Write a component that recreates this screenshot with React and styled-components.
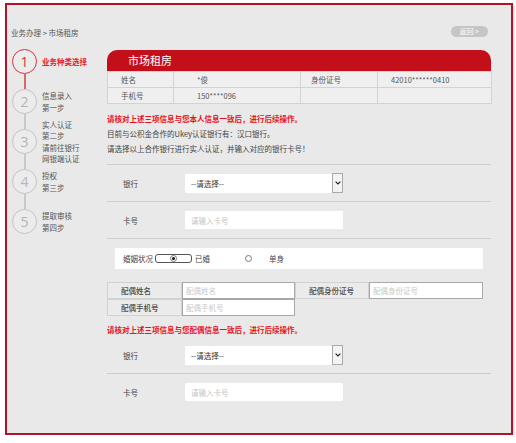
import React from 'react'
import styled, { createGlobalStyle } from 'styled-components'

const GlobalStyle = createGlobalStyle`
    body {
        margin: 0;
        background: #fff;
        font-family: "Noto Sans CJK SC", "Noto Sans", sans-serif;
    }
`

const Frame = styled.div`
    box-sizing: border-box;
    width: 508px;
    height: 432px;
    margin: 3px 0 0 5px;
    border: 2px solid #b0132b;
    background: #e9e9e9;
    box-shadow: 1px 1px 2px rgba(0, 0, 0, 0.18);
    display: flex;
    flex-direction: column;
`
const TopBar = styled.div`
    box-sizing: border-box;
    height: 44px;
    display: flex;
    align-items: center;
    justify-content: space-between;
    padding: 12px 23px 0 4px;
`
const Crumb = styled.div`
    font-size: 7.5px;
    line-height: 12px;
    color: #555;
`
const BackButton = styled.div`
    background: #c6c6c6;
    color: #fff;
    font-size: 7px;
    height: 11px;
    line-height: 11px;
    padding: 0 9px;
    border-radius: 6px;
    margin-top: -4px;
`
const Main = styled.div`
    display: flex;
    flex: 1;
`

const Sidebar = styled.div`
    box-sizing: border-box;
    width: 100px;
    padding-left: 5px;
    display: flex;
    flex-direction: column;
`
const Step = styled.div`
    display: flex;
    height: 40px;
    gap: 5px;
`
const Rail = styled.div`
    display: flex;
    flex-direction: column;
    align-items: center;
    width: 25px;
`
const Circle = styled.div`
    box-sizing: border-box;
    width: 25px;
    height: 25px;
    border-radius: 50%;
    border: 1.5px solid ${p => (p.$active ? '#d6353d' : '#c4c4c4')};
    color: ${p => (p.$active ? '#d6353d' : '#b4b4b4')};
    background: #ececec;
    font-family: "Open Sans", sans-serif;
    font-size: 14px;
    display: flex;
    align-items: center;
    justify-content: center;
`
const Connector = styled.div`
    width: 2px;
    height: 15px;
    background: ${p => (p.$active ? '#d46a70' : '#c8c8c8')};
`
const StepText = styled.div`
    height: 25px;
    display: flex;
    flex-direction: column;
    justify-content: center;
    font-size: 7.5px;
    line-height: 11.5px;
    white-space: nowrap;
    color: ${p => (p.$active ? '#e3222b' : '#555')};
    font-weight: ${p => (p.$active ? 700 : 400)};
`

const Content = styled.div`
    width: 384px;
    margin-top: 1px;
`
const Header = styled.div`
    height: 21px;
    line-height: 21px;
    padding-left: 21px;
    background: #c20f1a;
    border-radius: 10px 10px 0 0;
    color: #fff;
    font-size: 11px;
`
const InfoTable = styled.table`
    width: 100%;
    border-collapse: collapse;
    table-layout: fixed;
`
const Cell = styled.td`
    height: 15px;
    padding: 0 0 0 ${p => p.$pad}px;
    border: 1px solid #d3d3d3;
    background: #efefef;
    font-size: 7.5px;
    line-height: 15px;
    color: #555;
`
const Notes = styled.div`
    margin-top: 7px;
`
const Note = styled.p`
    margin: 0;
    font-size: 7.5px;
    line-height: 15px;
    color: ${p => (p.$warn ? '#e5141d' : '#444')};
    font-weight: ${p => (p.$warn ? 700 : 400)};
`
const Divider = styled.div`
    height: 1px;
    background: #cdcdcd;
    margin-top: ${p => p.$top || 0}px;
`
const FormRow = styled.div`
    height: 36px;
    display: flex;
    align-items: center;
    padding-left: 16px;
`
const FieldLabel = styled.div`
    width: 62px;
    font-size: 7.5px;
    color: #444;
`
const SelectBox = styled.div`
    box-sizing: border-box;
    width: 158px;
    height: 19px;
    background: #fff;
    display: flex;
    align-items: center;
    justify-content: space-between;
    padding-left: 6px;
    font-size: 7.5px;
    color: #333;
`
const ArrowBox = styled.div`
    box-sizing: border-box;
    width: 11px;
    height: 20px;
    border: 1px solid #a9a9a9;
    background: #f3f3f3;
    display: flex;
    align-items: center;
    justify-content: center;
`
const TextInput = styled.input`
    box-sizing: border-box;
    width: 158px;
    height: 18px;
    border: 0;
    padding: 0 6px;
    background: #fff;
    font-family: inherit;
    font-size: 7.5px;
    outline: none;
    &::placeholder {
        color: #c4c4c4;
    }
`

const MaritalBox = styled.div`
    height: 21px;
    margin: 9px 8px 0;
    padding-left: 8px;
    background: #fff;
    display: flex;
    align-items: center;
    font-size: 7.5px;
    color: #444;
`
const RadioFrame = styled.div`
    box-sizing: border-box;
    width: 37px;
    height: 9px;
    margin-left: 2px;
    border: 1px solid #555;
    border-radius: 3px;
    display: flex;
    align-items: center;
    justify-content: center;
`
const Radio = styled.div`
    box-sizing: border-box;
    width: 7px;
    height: 7px;
    border-radius: 50%;
    border: 1px solid #777;
    background: #fff;
    margin-left: ${p => p.$ml || 0}px;
    display: flex;
    align-items: center;
    justify-content: center;
    &::after {
        content: '';
        width: 3px;
        height: 3px;
        border-radius: 50%;
        background: ${p => (p.$checked ? '#111' : 'transparent')};
    }
`
const Choice = styled.span`
    margin-left: ${p => p.$ml}px;
`

const SpouseGrid = styled.div`
    display: grid;
    grid-template-columns: 75px 113px 74px 114px;
    grid-auto-rows: 17px;
    margin-top: 13px;
`
const SpouseLabel = styled.div`
    box-sizing: border-box;
    border: 1px solid #d2d2d2;
    background: #ebebeb;
    padding-left: 13px;
    font-size: 7.5px;
    line-height: 15px;
    font-weight: 500;
    color: #4a4a4a;
`
const SpouseInput = styled.input`
    box-sizing: border-box;
    width: 100%;
    height: 17px;
    border: 1px solid #a8a8a8;
    padding: 0 3px;
    background: #fff;
    font-family: inherit;
    font-size: 7.5px;
    outline: none;
    &::placeholder {
        color: #c8c8c8;
    }
`
const RedNote = styled(Note)`
    margin-top: 6px;
`

const steps = [
    { n: 1, lines: ['业务种类选择'], active: true },
    { n: 2, lines: ['信息录入', '第一步'] },
    { n: 3, lines: ['实人认证', '第二步', '请前往银行', '网银端认证'] },
    { n: 4, lines: ['授权', '第三步'] },
    { n: 5, lines: ['提取审核', '第四步'] },
]

function Chevron() {
    return (
        <svg width="6" height="4" viewBox="0 0 6 4">
            <path d="M0.6 0.6 L3 3 L5.4 0.6" fill="none" stroke="#222" strokeWidth="1.1" />
        </svg>
    )
}

function BankSelect() {
    return (
        <SelectBox>
            --请选择--
            <ArrowBox><Chevron /></ArrowBox>
        </SelectBox>
    )
}

function BankFields() {
    return (
        <>
            <FormRow>
                <FieldLabel>银行</FieldLabel>
                <BankSelect />
            </FormRow>
            <Divider />
            <FormRow>
                <FieldLabel>卡号</FieldLabel>
                <TextInput placeholder="请输入卡号" />
            </FormRow>
        </>
    )
}

export default function App() {
    return (
        <>
            <GlobalStyle />
            <Frame>
                <TopBar>
                    <Crumb>业务办理 &gt; 市场租房</Crumb>
                    <BackButton>返回 &gt;</BackButton>
                </TopBar>
                <Main>
                    <Sidebar>
                        {steps.map((s, i) => (
                            <Step key={s.n}>
                                <Rail>
                                    <Circle $active={s.active}>{s.n}</Circle>
                                    {i < steps.length - 1 && <Connector $active={s.active} />}
                                </Rail>
                                <StepText $active={s.active}>
                                    {s.lines.map(l => <span key={l}>{l}</span>)}
                                </StepText>
                            </Step>
                        ))}
                    </Sidebar>
                    <Content>
                        <Header>市场租房</Header>
                        <InfoTable>
                            <colgroup>
                                <col style={{ width: 66 }} />
                                <col style={{ width: 127 }} />
                                <col style={{ width: 77 }} />
                                <col style={{ width: 114 }} />
                            </colgroup>
                            <tbody>
                                <tr>
                                    <Cell $pad={13}>姓名</Cell>
                                    <Cell $pad={23}>*俊</Cell>
                                    <Cell $pad={10}>身份证号</Cell>
                                    <Cell $pad={13}>42010******0410</Cell>
                                </tr>
                                <tr>
                                    <Cell $pad={13}>手机号</Cell>
                                    <Cell $pad={23}>150****096</Cell>
                                    <Cell $pad={10}></Cell>
                                    <Cell $pad={13}></Cell>
                                </tr>
                            </tbody>
                        </InfoTable>
                        <Notes>
                            <Note $warn>请核对上述三项信息与您本人信息一致后，进行后续操作。</Note>
                            <Note>目前与公积金合作的Ukey认证银行有：汉口银行。</Note>
                            <Note>请选择以上合作银行进行实人认证，并输入对应的银行卡号！</Note>
                        </Notes>
                        <Divider $top={8} />
                        <BankFields />
                        <Divider />
                        <MaritalBox>
                            婚姻状况
                            <RadioFrame><Radio $checked /></RadioFrame>
                            <Choice $ml={3}>已婚</Choice>
                            <Radio $ml={35} />
                            <Choice $ml={17}>单身</Choice>
                        </MaritalBox>
                        <SpouseGrid>
                            <SpouseLabel>配偶姓名</SpouseLabel>
                            <SpouseInput placeholder="配偶姓名" />
                            <SpouseLabel>配偶身份证号</SpouseLabel>
                            <SpouseInput placeholder="配偶身份证号" />
                            <SpouseLabel>配偶手机号</SpouseLabel>
                            <SpouseInput placeholder="配偶手机号" />
                        </SpouseGrid>
                        <RedNote $warn>请核对上述三项信息与您配偶信息一致后，进行后续操作。</RedNote>
                        <BankFields />
                    </Content>
                </Main>
            </Frame>
        </>
    )
}
